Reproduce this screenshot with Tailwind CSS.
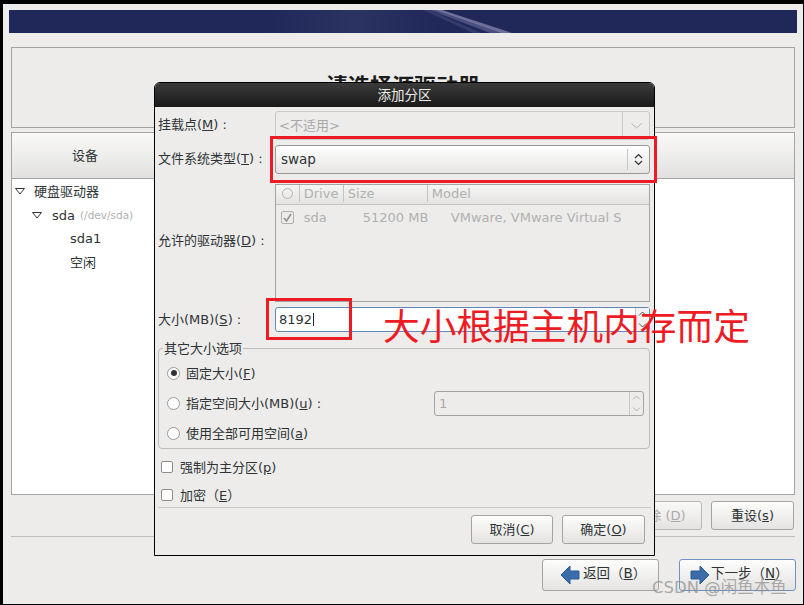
<!DOCTYPE html>
<html lang="zh">
<head>
  <meta charset="UTF-8">
  <title>添加分区</title>
  <script src="https://cdn.jsdelivr.net/npm/@tailwindcss/browser@4"></script>
</head>
<body class="m-0 bg-black">
  <div class="relative w-[804px] h-[605px] overflow-hidden bg-black pt-[4px] pl-[3px] pr-px pb-px font-['DejaVu_Sans','Noto_Sans_CJK_SC',sans-serif] text-[13px] leading-none text-[#2e3436]">
    <!-- installer screen behind the dialog -->
    <div class="relative h-[600px] bg-[#edeceb] pt-[6px] pl-[6px] pr-[6px]">
      <div class="relative h-[23px] w-[788px] overflow-hidden bg-[#20285a]">
        <div class="absolute left-[260px] top-0 h-full w-[170px] bg-gradient-to-r from-transparent via-[#2b3362] to-transparent"></div>
        <svg class="absolute left-0 top-0" width="788" height="23" viewBox="0 0 788 23">
          <polygon points="421,0 430,0 495,23 481,23" fill="#4a4f80" />
          <polygon points="427,0 433,0 503,23 493,23" fill="#8f8aae" opacity=".7" />
          <polygon points="414,0 421,0 472,23 464,23" fill="#343a6c" />
        </svg>
      </div>

      <div class="ml-[2px] mt-[14px] h-[81px] w-[784px] border border-[#a5a4a2] flex justify-center pt-[28px]">
        <span class="text-[22px] font-bold leading-[22px] text-[#1c1c1c]">请选择源驱动器</span>
      </div>

      <div class="ml-[2px] mt-[4px] h-[363px] w-[784px] border border-[#a5a4a2] bg-white">
        <div class="h-[46px] border-b border-[#a5a4a2] bg-gradient-to-b from-[#f9f9f8] to-[#e2e1df] flex items-center pl-[60px]">设备</div>
        <div class="relative">
          <div class="flex items-center h-[24px] pl-[3px]">
            <svg width="10" height="7" viewBox="0 0 10 7"><path d="M.5.5h9L5 6z" fill="none" stroke="#2e3436" /></svg>
            <span class="ml-[9px]">硬盘驱动器</span>
          </div>
          <div class="flex items-center h-[24px] pl-[20px]">
            <svg width="10" height="7" viewBox="0 0 10 7"><path d="M.5.5h9L5 6z" fill="none" stroke="#2e3436" /></svg>
            <span class="ml-[10px]">sda</span>
            <span class="ml-[5px] text-[10.5px] text-[#b0b0b0]">(/dev/sda)</span>
          </div>
          <div class="flex items-center h-[23px] pl-[58px]">sda1</div>
          <div class="flex items-center h-[24px] pl-[58px]">空闲</div>
        </div>
      </div>

      <div class="ml-[2px] mt-[6px] flex justify-end gap-[9px] w-[783px] pr-0">
        <div class="h-[29px] w-[83px] rounded-[3px] border border-[#b8b7b5] bg-gradient-to-b from-[#f9f9f8] to-[#e4e3e1] flex items-center justify-center text-[#aaa]">删除 (<u>D</u>)</div>
        <div class="h-[29px] w-[83px] rounded-[3px] border border-[#a5a4a2] bg-gradient-to-b from-[#fdfdfc] to-[#e4e3e1] flex items-center justify-center">重设(<u>s</u>)</div>
      </div>
      <div class="ml-[2px] mt-[6px] h-px w-[784px] bg-[#bdbcba]"></div>

      <div class="mt-[22px] flex justify-end gap-[20px] w-[787px]">
        <div class="h-[32px] w-[117px] rounded-[3px] border border-[#a5a4a2] bg-gradient-to-b from-[#fdfdfc] to-[#e4e3e1] flex items-center pl-[18px] gap-[2px]">
          <svg width="20" height="20" viewBox="0 0 20 20"><path d="M0 10 9 1v5h9v8H9v5z" fill="#3b6cab" stroke="#2d5a96" /></svg>
          <span class="text-[13.500px] pb-[2px]">返回（<u>B</u>）</span>
        </div>
        <div class="h-[32px] w-[117px] rounded-[3px] border border-[#6d93c4] bg-gradient-to-b from-[#fdfdfc] to-[#e4e3e1] flex items-center pl-[10px] gap-[1px]">
          <svg width="20" height="20" viewBox="0 0 20 20"><path d="M19 10 10 1v5H1v8h9v5z" fill="#3b6cab" stroke="#2d5a96" /></svg>
          <span class="text-[13.500px] pb-[2px]">下一步（<u>N</u>）</span>
        </div>
      </div>
    </div>

    <!-- modal dialog -->
    <div class="absolute left-[154px] top-[82px] w-[501px] h-[474px] border border-black rounded-t-[6px] bg-[#edeceb]">
      <div class="h-[24px] pt-[2px] rounded-t-[5px] bg-gradient-to-b from-[#3b3b3b] to-[#1a1a1a] flex items-center justify-center text-[13.500px] text-[#eeeeec]">添加分区</div>

      <div class="pl-[3px] pr-[4px] pt-[4px]">
        <div class="flex items-center h-[29px]">
          <span class="w-[117px] pb-[2px]">挂载点(<u>M</u>) :</span>
          <div class="h-[29px] w-[375px] rounded-[3px] border border-[#c8c7c5] flex items-center">
            <span class="flex-1 pl-[3px] text-[#a9a9a9]">&lt;不适用&gt;</span>
            <div class="h-full w-[27px] border-l border-[#c8c7c5] flex items-center justify-center">
              <svg width="11" height="6" viewBox="0 0 11 6"><path d="M.5.5 5.500 5l5-4.500" fill="none" stroke="#b0b0b0" /></svg>
            </div>
          </div>
        </div>

        <div class="flex items-center h-[29px] mt-[5px]">
          <span class="w-[117px] pb-[2px]">文件系统类型(<u>T</u>) :</span>
          <div class="h-[29px] w-[375px] rounded-[3px] border border-[#9a9997] bg-gradient-to-b from-white to-[#e6e5e3] flex items-center">
            <span class="flex-1 pl-[5px] text-[13.500px] text-[#2e3436]">swap</span>
            <div class="h-[21px] w-[22px] border-l border-[#c8c7c5] flex items-center justify-center">
              <svg width="9" height="13" viewBox="0 0 9 13"><path d="M1 5l3.500-3.500L8 5M1 8l3.500 3.500L8 8" fill="none" stroke="#2e3436" stroke-width="1.200" /></svg>
            </div>
          </div>
        </div>

        <div class="flex items-center h-[118px] mt-[10px]">
          <span class="w-[117px] pb-[6px]">允许的驱动器(<u>D</u>) :</span>
          <div class="h-[118px] w-[376px] border border-[#a5a4a2] bg-[#edeceb] text-[#b0b0b0]">
            <div class="h-[20px] pb-[2px] border-b border-[#c4c3c1] bg-gradient-to-b from-[#f5f5f4] to-[#e4e3e1] flex items-center">
              <span class="w-[23px] flex justify-center"><span class="block w-[11px] h-[11px] rounded-full border border-[#b5b5b5]"></span></span>
              <span class="h-[17px] border-l border-[#c4c3c1] w-[44px] pl-[4px] flex items-center">Drive</span>
              <span class="h-[17px] border-l border-[#c4c3c1] w-[84px] pl-[4px] flex items-center">Size</span>
              <span class="h-[17px] border-l border-[#c4c3c1] pl-[4px] flex items-center">Model</span>
            </div>
            <div class="h-[24px] flex items-center">
              <span class="w-[23px] flex justify-center">
                <span class="flex items-center justify-center w-[13px] h-[13px] rounded-[2px] border border-[#b0b0b0]">
                  <svg width="9" height="9" viewBox="0 0 9 9"><path d="M1 5l2.500 3L8 1" fill="none" stroke="#8e8e8e" stroke-width="1.500" /></svg>
                </span>
              </span>
              <span class="w-[64px] pl-[5px]">sda</span>
              <span class="w-[88px]">51200 MB</span>
              <span>VMware, VMware Virtual S</span>
            </div>
          </div>
        </div>

        <div class="flex items-center h-[25px] mt-[5px]">
          <span class="w-[117px]">大小(MB)(<u>S</u>) :</span>
          <div class="relative h-[25px] w-[375px] rounded-[3px] border border-[#5f88bd] bg-white flex items-center pl-[3px] pr-[14px]">
            <span class="text-[13px] border-r border-[#222] pr-px">8192</span>
            <div class="absolute right-0 top-0 h-full w-[14px] border-l border-[#c8c7c5] bg-[#f2f1f0] flex flex-col items-center justify-around">
              <svg width="9" height="5" viewBox="0 0 9 5"><path d="M1 4.500 4.500 1 8 4.500" fill="none" stroke="#555" /></svg>
              <svg width="9" height="5" viewBox="0 0 9 5"><path d="M1 .5 4.500 4 8 .5" fill="none" stroke="#555" /></svg>
            </div>
          </div>
        </div>

        <fieldset class="relative mt-[16px] h-[101px] w-[492px] rounded-[4px] border border-[#bdbcba] px-[8px] pt-[9px]">
          <span class="absolute left-[4px] top-[-7px] bg-[#edeceb] px-px">其它大小选项</span>
          <div class="flex items-center h-[30px] gap-[6px]">
            <span class="flex items-center justify-center w-[13px] h-[13px] rounded-full border border-[#9a9997] bg-white">
              <span class="block w-[6px] h-[6px] rounded-full bg-[#2e3436]"></span>
            </span>
            <span>固定大小(<u>F</u>)</span>
          </div>
          <div class="relative flex items-center h-[30px] gap-[6px]">
            <span class="w-[13px] h-[13px] rounded-full border border-[#9a9997] bg-white"></span>
            <span>指定空间大小(MB)(<u>u</u>) :</span>
            <div class="absolute left-[267px] top-[3px] h-[25px] w-[210px] rounded-[3px] border border-[#a5a4a2] flex items-center pl-[4px] text-[#a9a9a9]">
              1
              <div class="absolute right-0 top-0 h-full w-[14px] border-l border-[#c8c7c5] flex flex-col items-center justify-around">
                <svg width="9" height="5" viewBox="0 0 9 5"><path d="M1 4.500 4.500 1 8 4.500" fill="none" stroke="#b0b0b0" /></svg>
                <svg width="9" height="5" viewBox="0 0 9 5"><path d="M1 .5 4.500 4 8 .5" fill="none" stroke="#b0b0b0" /></svg>
              </div>
            </div>
          </div>
          <div class="flex items-center h-[30px] gap-[6px]">
            <span class="w-[13px] h-[13px] rounded-full border border-[#9a9997] bg-white"></span>
            <span>使用全部可用空间(<u>a</u>)</span>
          </div>
        </fieldset>

        <div class="flex items-center h-[28px] mt-[4px] gap-[7px] pl-[3px]">
          <span class="w-[12px] h-[12px] rounded-[2px] border border-[#8e8d8b] bg-white"></span>
          <span>强制为主分区(<u>p</u>)</span>
        </div>
        <div class="flex items-center h-[28px] gap-[7px] pl-[3px]">
          <span class="w-[12px] h-[12px] rounded-[2px] border border-[#8e8d8b] bg-white"></span>
          <span>加密（<u>E</u>）</span>
        </div>

        <div class="mt-[-2px] h-px w-[493px] bg-[#c8c7c5]"></div>
        <div class="mt-[7px] flex justify-end gap-[9px] pr-[5px]">
          <div class="h-[29px] w-[82px] rounded-[3px] border border-[#a5a4a2] bg-gradient-to-b from-[#fdfdfc] to-[#e4e3e1] flex items-center justify-center">取消(<u>C</u>)</div>
          <div class="h-[29px] w-[83px] rounded-[3px] border border-[#a5a4a2] bg-gradient-to-b from-[#fdfdfc] to-[#e4e3e1] flex items-center justify-center">确定(<u>O</u>)</div>
        </div>
      </div>
    </div>

    <!-- red annotations drawn on top -->
    <div class="absolute left-[270px] top-[136px] w-[387px] h-[47px] border-[3px] border-[#ed1c24]"></div>
    <div class="absolute left-[266px] top-[298px] w-[86px] h-[42px] border-[3px] border-[#ed1c24]"></div>
    <div class="absolute left-[383px] top-[304px] whitespace-nowrap text-[36.700px] leading-[40px] text-[#ed1c24] font-['Noto_Sans_CJK_SC',sans-serif]">大小根据主机内存而定</div>
    <div class="absolute left-[652px] top-[579px] whitespace-nowrap text-[16.500px] leading-[18px] text-[#8a8a8a]/70">CSDN @闲鱼本鱼</div>
  </div>
</body>
</html>
